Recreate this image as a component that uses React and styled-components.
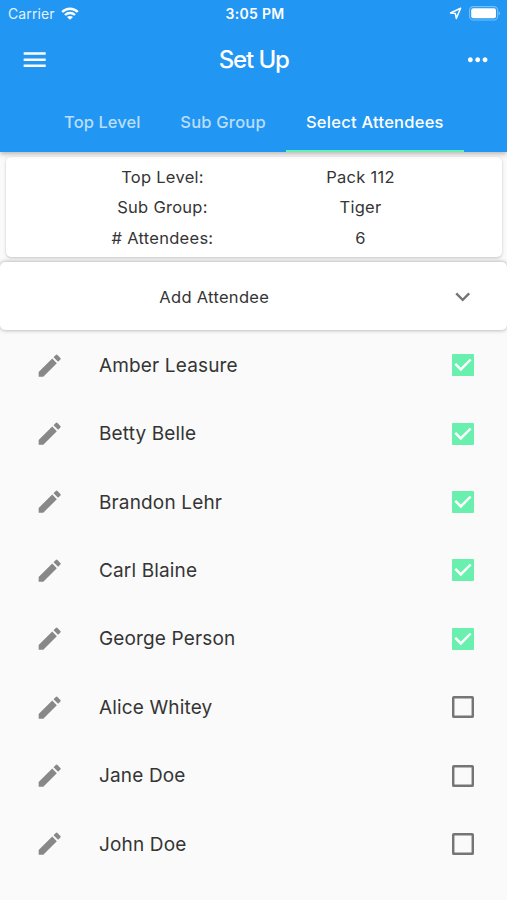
import React from 'react';
import styled, {createGlobalStyle} from 'styled-components';
import {MdEdit, MdExpandMore, MdMenu, MdMoreHoriz} from 'react-icons/md';

const tabs = [
    {label: 'Top Level', width: 115.5, spacing: 0.08},
    {label: 'Sub Group', width: 126, spacing: 0.2},
    {label: 'Select Attendees', width: 177.5, spacing: 0.25, active: true},
];

const summary = [
    {label: 'Top Level:', value: 'Pack 112'},
    {label: 'Sub Group:', value: 'Tiger'},
    {label: '# Attendees:', value: '6'},
];

const attendees = [
    {name: 'Amber Leasure', checked: true},
    {name: 'Betty Belle', checked: true},
    {name: 'Brandon Lehr', checked: true},
    {name: 'Carl Blaine', checked: true},
    {name: 'George Person', checked: true},
    {name: 'Alice Whitey', checked: false},
    {name: 'Jane Doe', checked: false},
    {name: 'John Doe', checked: false},
];

const IconWifi = () => (
    <svg width="18" height="13" viewBox="0 0 18 13" fill="none" stroke="currentColor" strokeWidth="2.4">
        <path d="M1.2 5C5.6 0.6 12.4 0.6 16.8 5"/>
        <path d="M4 8C6.8 5.3 11.2 5.3 14 8"/>
        <path d="M9 12.8L6 10C7.7 8.5 10.3 8.5 12 10Z" fill="currentColor" stroke="none"/>
    </svg>
)

const IconLocation = () => (
    <svg width="13" height="13" viewBox="0 0 13 13" fill="none" stroke="currentColor" strokeWidth="1.5"
         strokeLinejoin="round">
        <path d="M11.6 1.3L1.5 6L6.4 6.5L7.3 11.4Z"/>
    </svg>
)

const IconBattery = () => (
    <svg width="32" height="15" viewBox="0 0 32 15">
        <rect x="0.6" y="0.6" width="28" height="13.4" rx="3.6" fill="none" stroke="currentColor" strokeOpacity="0.4"
              strokeWidth="1.1"/>
        <rect x="2.2" y="2.3" width="24.8" height="10" rx="2" fill="currentColor"/>
        <path d="M29.7 5.3C31.3 6 31.3 8.6 29.7 9.3Z" fill="currentColor" fillOpacity="0.5"/>
    </svg>
)

const CheckBox = ({checked}) => (
    <svg width="22" height="22" viewBox="0 0 18 18" fill="none">
        {checked ? (
            <>
                <rect width="18" height="18" rx="0.6" fill="#69f0ae"/>
                <path d="M2.7 8.1L7.2 12.6L15.3 4.5" stroke="#fff" strokeWidth="2"/>
            </>
        ) : (
            <rect x="1" y="1" width="16" height="16" rx="0.5" stroke="#757575" strokeWidth="2"/>
        )}
    </svg>
)

const App = () => {
    return (
        <Screen>
            <GlobalStyle/>
            <Header>
                <StatusBar>
                    <Carrier>
                        <span>Carrier</span>
                        <IconWifi/>
                    </Carrier>
                    <Time>3:05 PM</Time>
                    <Indicators>
                        <IconLocation/>
                        <IconBattery/>
                    </Indicators>
                </StatusBar>
                <AppBar>
                    <MdMenu size={29.4}/>
                    <Title>Set Up</Title>
                    <MdMoreHoriz size={29.4}/>
                </AppBar>
                <TabBar>
                    {tabs.map((tab) => (
                        <Tab key={tab.label} $width={tab.width} $spacing={tab.spacing} $active={tab.active}>
                            {tab.label}
                        </Tab>
                    ))}
                </TabBar>
            </Header>
            <SummaryCard>
                {summary.map((row) => (
                    <SummaryRow key={row.label}>
                        <span>{row.label}</span>
                        <span>{row.value}</span>
                    </SummaryRow>
                ))}
            </SummaryCard>
            <AddCard>
                <AddLabel>Add Attendee</AddLabel>
                <MdExpandMore size={29.4}/>
            </AddCard>
            <List>
                {attendees.map((person) => (
                    <Row key={person.name}>
                        <MdEdit size={29.4}/>
                        <Name>{person.name}</Name>
                        <CheckBox checked={person.checked}/>
                    </Row>
                ))}
            </List>
        </Screen>
    )
}

const GlobalStyle = createGlobalStyle`
  body {
    margin: 0;
    background: #fafafa;
  }

  * {
    box-sizing: border-box;
  }

  svg {
    display: block;
    flex-shrink: 0;
  }
`;

const Screen = styled.div`
  width: 507px;
  height: 900px;
  overflow: hidden;
  background: #fafafa;
  color: #353535;
  font-family: Inter, Roboto, sans-serif;
`;

const Header = styled.header`
  position: relative;
  z-index: 1;
  height: 152px;
  background: #2196f3;
  color: #fff;
  box-shadow: 0 2px 5px rgba(0, 0, 0, 0.28);
`;

const StatusBar = styled.div`
  display: grid;
  grid-template-columns: 1fr auto 1fr;
  align-items: center;
  height: 25px;
  padding: 2px 6px 0 8px;
`;

const Carrier = styled.div`
  display: flex;
  align-items: center;
  gap: 6.5px;
  font-size: 14px;
  letter-spacing: 0.1px;

  span {
    opacity: 0.88;
  }
`;

const Time = styled.div`
  padding-left: 1px;
  font-size: 14px;
  font-weight: 600;
  letter-spacing: 0.3px;
`;

const Indicators = styled.div`
  display: flex;
  align-items: center;
  justify-content: flex-end;
  gap: 7px;
`;

const AppBar = styled.div`
  display: flex;
  align-items: center;
  justify-content: space-between;
  height: 69px;
  padding: 0 15px 0 20px;
`;

const Title = styled.h1`
  margin: 0;
  padding-right: 4.5px;
  font-size: 24px;
  font-weight: 500;
  letter-spacing: -1.1px;
`;

const TabBar = styled.nav`
  display: flex;
  height: 58px;
  padding-left: 44.6px;
`;

const Tab = styled.div`
  display: flex;
  align-items: center;
  justify-content: center;
  width: ${({$width}) => $width}px;
  border-bottom: 2.5px solid ${({$active}) => ($active ? '#69f0ae' : 'transparent')};
  color: ${({$active}) => ($active ? '#fff' : 'rgba(255, 255, 255, 0.7)')};
  font-size: 16.5px;
  font-weight: 500;
  letter-spacing: ${({$spacing}) => $spacing}px;
  white-space: nowrap;
`;

const SummaryCard = styled.section`
  height: 100px;
  margin: 5px 5px 0 6px;
  padding: 4.4px 6px 0;
  border-radius: 5px;
  background: #fff;
  box-shadow: 0 1px 3px rgba(0, 0, 0, 0.22);
`;

const SummaryRow = styled.div`
  display: grid;
  grid-template-columns: 301px 95px;
  height: 30.5px;
  align-items: center;
  font-size: 16.5px;
  letter-spacing: 0.27px;
  text-align: center;
`;

const AddCard = styled.section`
  display: flex;
  align-items: center;
  justify-content: space-between;
  height: 68px;
  margin-top: 5px;
  padding: 1px 29.5px 0 0;
  border-radius: 5px;
  background: #fff;
  box-shadow: 0 0 4px rgba(0, 0, 0, 0.36);

  svg {
    color: #757575;
  }
`;

const AddLabel = styled.div`
  width: 428.5px;
  font-size: 16.5px;
  letter-spacing: 0.3px;
  text-align: center;
`;

const List = styled.div`
  padding-top: 1px;
`;

const Row = styled.div`
  display: flex;
  align-items: center;
  height: 68.43px;
  padding: 0 33px 0 35px;

  svg:first-child {
    color: #888;
  }
`;

const Name = styled.div`
  flex: 1;
  padding-left: 34.6px;
  font-size: 19px;
  letter-spacing: 0.15px;
`;

export default App;
